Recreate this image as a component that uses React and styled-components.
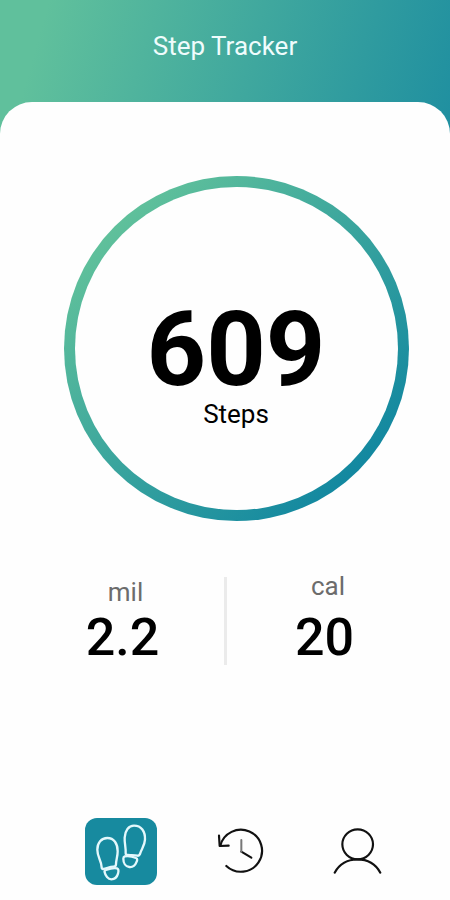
import React from "react";
import styled, { createGlobalStyle } from "styled-components";

export default function App() {
  return (
    <Screen>
      <GlobalStyle />
      <Header>Step Tracker</Header>
      <Panel>
        <Ring>
          <RingInner>
            <StepCount>609</StepCount>
            <StepLabel>Steps</StepLabel>
          </RingInner>
        </Ring>
        <Stats>
          <Stat>
            <StatLabel>mil</StatLabel>
            <StatValue>2.2</StatValue>
          </Stat>
          <Divider />
          <Stat $right>
            <StatLabel $right>cal</StatLabel>
            <StatValue>20</StatValue>
          </Stat>
        </Stats>
        <TabBar>
          <Tab $active aria-label="steps">
            <StepsIcon />
          </Tab>
          <Tab aria-label="history">
            <HistoryIcon />
          </Tab>
          <Tab aria-label="profile">
            <ProfileIcon />
          </Tab>
        </TabBar>
      </Panel>
    </Screen>
  );
}

function StepsIcon() {
  return (
    <Icon width="72" height="67" viewBox="30 24 216 201" $color="#e4f8fc">
      <g strokeWidth="7">
        <path d="M80 172C79 150 67 142 67 119C67 98 79 84 97 84C117 84 128 101 128 124C128 140 123 150 123 163C123 168 120 170 115 170C103 170 94 177 84 177C81 177 80 175 80 172Z" />
        <path d="M93 180C104 176 116 173 126 175C131 177 131 184 129 191C126 202 118 208 109 208C99 208 91 197 89 187C88 184 90 181 93 180Z" />
        <path d="M152 130C153 112 148 99 149 83C150 61 161 47 177 47C199 47 211 64 210 89C209 108 199 117 195 132C193 137 191 138 187 137C178 134 167 136 158 135C153 135 152 133 152 130Z" />
        <path d="M149 139C160 137 174 140 183 144C188 146 187 151 184 157C180 167 172 172 163 171C152 170 145 159 145 146C145 142 146 140 149 139Z" />
      </g>
    </Icon>
  );
}

function HistoryIcon() {
  return (
    <Icon width="75" height="70" viewBox="0 4 225 210" $color="#111">
      <g strokeWidth="6.5">
        <path d="M46 90A63.5 63 0 1 1 64 151" />
        <path d="M42 60L44 91L71 90" />
        <path d="M109 108L139 126" />
      </g>
      <path d="M109 73V108" stroke="#777" strokeWidth="6" />
    </Icon>
  );
}

function ProfileIcon() {
  return (
    <Icon width="75" height="70" viewBox="0 4 225 210" $color="#111">
      <g strokeWidth="6.5">
        <ellipse cx="113" cy="86" rx="46" ry="45" />
        <path d="M44 171C58 145 84 131 112 131C141 131 167 145 181 171" />
      </g>
    </Icon>
  );
}

const GlobalStyle = createGlobalStyle`
  body {
    margin: 0;
    background: #fefefe;
  }
`;

const Screen = styled.div`
  display: flex;
  flex-direction: column;
  width: 450px;
  height: 900px;
  overflow: hidden;
  font-family: Roboto, sans-serif;
  color: #000;
  background: linear-gradient(106deg, #60c09c 10%, #1f8fa0 100%) top / 100%
    140px no-repeat;
`;

const Header = styled.header`
  height: 102px;
  box-sizing: border-box;
  padding-top: 31px;
  font-size: 26px;
  line-height: 30px;
  text-align: center;
  color: #effcfc;
`;

const Panel = styled.main`
  flex: 1;
  display: flex;
  flex-direction: column;
  border-radius: 32px 32px 0 0;
  background-color: #fefefe;
`;

const Ring = styled.div`
  width: 345px;
  height: 345px;
  box-sizing: border-box;
  margin: 74px 0 0 64px;
  padding: 11px;
  border-radius: 50%;
  background: linear-gradient(135deg, #5fc09b 15%, #1388a0 85%);
`;

const RingInner = styled.div`
  height: 100%;
  box-sizing: border-box;
  padding: 113px 1px 0 0;
  border-radius: 50%;
  text-align: center;
  background-color: #fefefe;
`;

const StepCount = styled.div`
  font-size: 104px;
  font-weight: bold;
  line-height: 100px;
`;

const StepLabel = styled.div`
  font-size: 26px;
  line-height: 28px;
`;

const Stats = styled.section`
  display: flex;
  height: 88px;
  margin-top: 56px;
`;

const Stat = styled.div`
  display: flex;
  flex-direction: column;
  justify-content: flex-end;
  align-items: center;
  width: ${(props) => (props.$right ? "195px" : "159px")};
  margin-left: ${(props) => (props.$right ? "0" : "43px")};
`;

const StatLabel = styled.div`
  margin-left: ${(props) => (props.$right ? "7px" : "6px")};
  margin-bottom: ${(props) => (props.$right ? "10px" : "4px")};
  font-size: 26px;
  line-height: 30px;
  color: #6c6c6c;
`;

const StatValue = styled.div`
  font-size: 52px;
  font-weight: 500;
  line-height: 54px;
`;

const Divider = styled.div`
  width: 3px;
  margin-left: 22px;
  background-color: #ebebeb;
`;

const TabBar = styled.nav`
  display: flex;
  align-items: center;
  height: 67px;
  margin-top: 153px;
  padding-left: 85px;
`;

const Tab = styled.button`
  display: flex;
  justify-content: center;
  align-items: center;
  width: ${(props) => (props.$active ? "72px" : "75px")};
  height: 67px;
  margin-right: ${(props) => (props.$active ? "48px" : "40px")};
  padding: 0;
  border: none;
  border-radius: 12px;
  background-color: ${(props) => (props.$active ? "#178a9f" : "transparent")};
`;

const Icon = styled.svg`
  flex-shrink: 0;
  fill: none;
  stroke: ${(props) => props.$color};
  stroke-linecap: round;
  stroke-linejoin: round;
`;
